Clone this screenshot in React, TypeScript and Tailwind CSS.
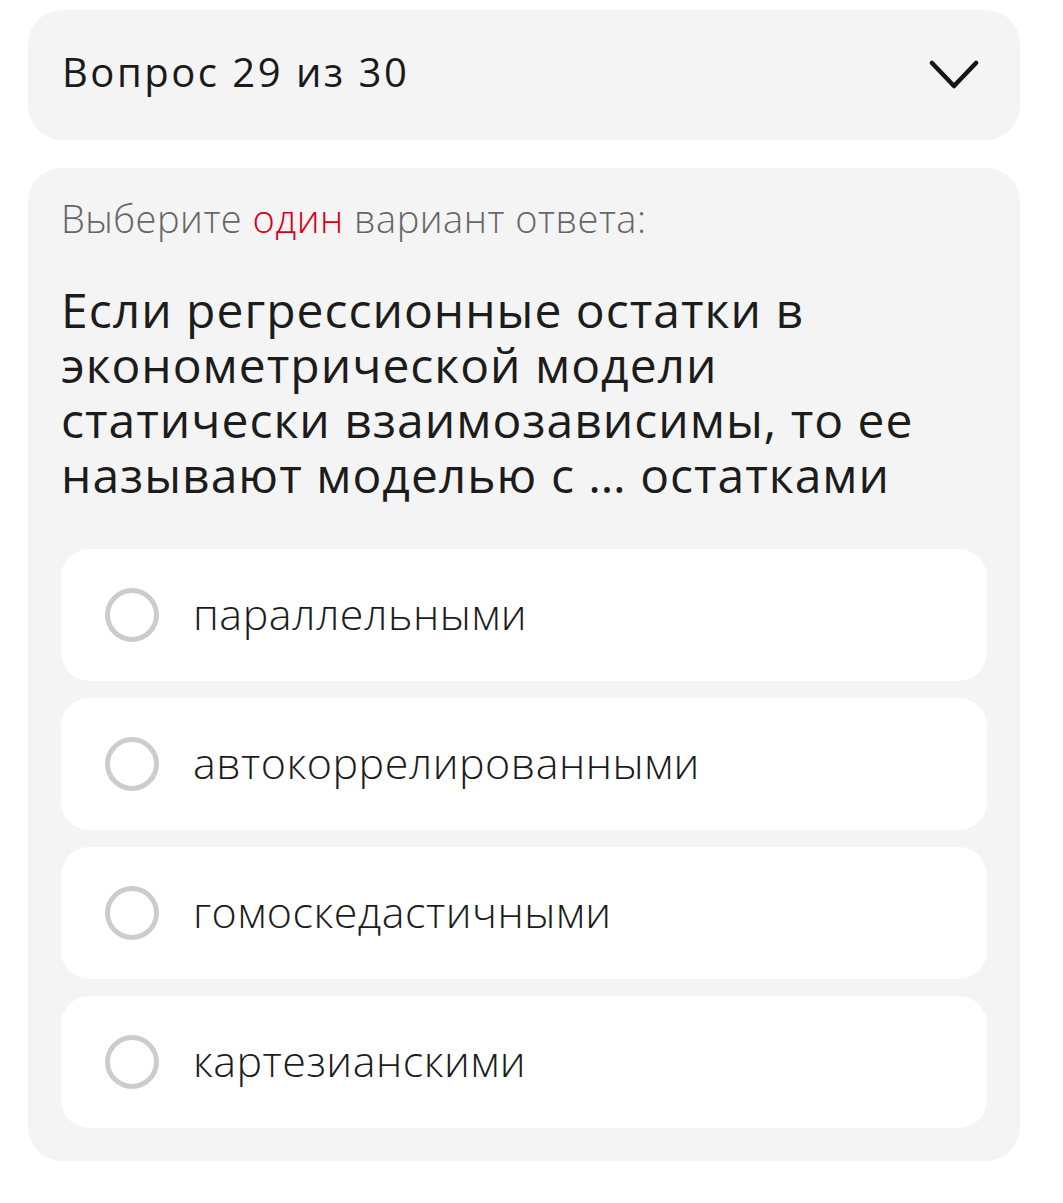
import React from "react";

const options = [
  "параллельными",
  "автокоррелированными",
  "гомоскедастичными",
  "картезианскими",
];

function Chevron() {
  return (
    <svg width="50" height="32" viewBox="0 0 50 32" fill="none">
      <path d="M3 4 L25 27 L47 4" stroke="#161616" strokeWidth="4.5" strokeLinecap="round" strokeLinejoin="round" />
    </svg>
  );
}

export default function App() {
  return (
    <div
      className="bg-white min-h-[1203px] w-[1063px] pt-[10px] text-[#1a1a1a]"
      style={{ fontFamily: "'Open Sans', 'Noto Sans', sans-serif" }}
    >
      <div className="ml-[28px] w-[992px] h-[130px] rounded-[34px] bg-[#f4f4f4] flex items-center justify-between pl-[34px] pr-[41px]">
        <span className="text-[40px] leading-none tracking-[2.5px] pb-[6px]">Вопрос 29 из 30</span>
        <Chevron />
      </div>

      <div className="ml-[28px] w-[992px] mt-[28px] rounded-[34px] bg-[#f4f4f4] px-[33px] pt-[26px] pb-[33px]">
        <p className="text-[38px] font-light text-[#666666] leading-[48px] tracking-[0.5px]">
          Выберите <span className="text-[#d4001a]">один</span> вариант ответа:
        </p>
        <p className="mt-[40px] text-[48px] font-medium leading-[55px] tracking-[1px] text-[#1c1c1c]">
          Если регрессионные остатки в<br />
          эконометрической модели<br />
          статически взаимозависимы, то ее<br />
          называют моделью с … остатками
        </p>
        <div className="mt-[47px] flex flex-col gap-[17px]">
          {options.map((o) => (
            <div key={o} className="h-[132px] rounded-[28px] bg-white flex items-center pl-[44px]">
              <span className="w-[54px] h-[54px] rounded-full border-[5px] border-[#cccccc] shrink-0" />
              <span className="ml-[34px] text-[43px] font-light leading-none tracking-[0.5px] pb-[4px] text-[#1c1c1c]">{o}</span>
            </div>
          ))}
        </div>
      </div>
    </div>
  );
}
